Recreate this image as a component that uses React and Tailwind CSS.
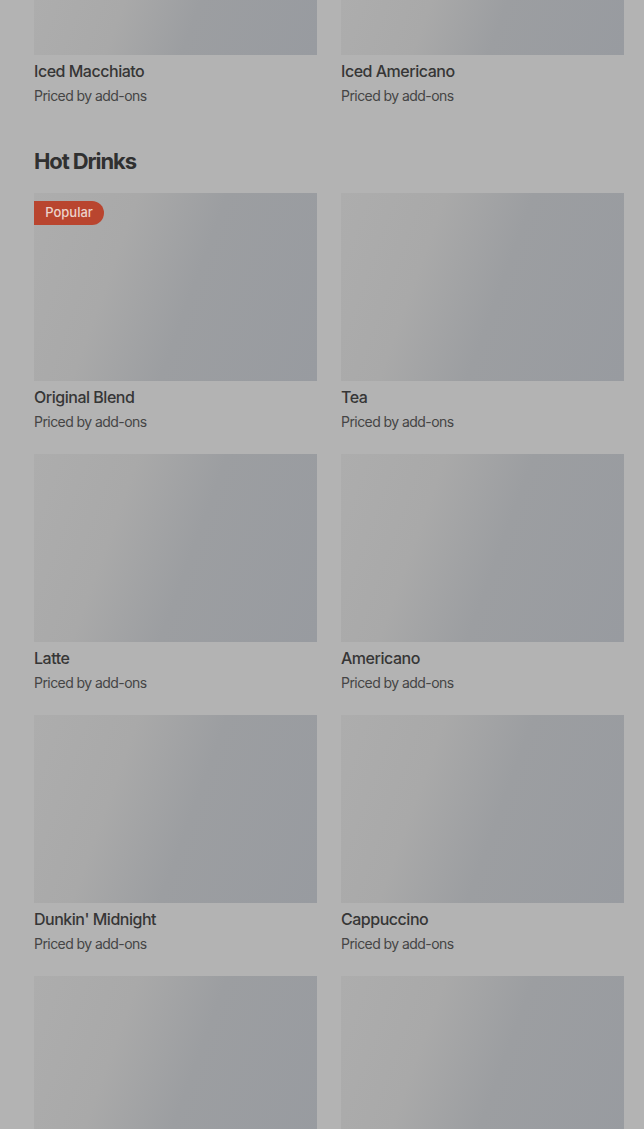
import React from "react";

const hotDrinks = [
  { name: "Original Blend", popular: true },
  { name: "Tea" },
  { name: "Latte" },
  { name: "Americano" },
  { name: "Dunkin' Midnight" },
  { name: "Cappuccino" },
  { name: "" },
  { name: "" },
];

function ItemCard({ name, popular, short }) {
  return (
    <div className="flex flex-col">
      <div
        className={`relative w-full bg-[linear-gradient(110deg,#adadad_0%,#a9a9a9_30%,#9c9ea1_55%,#989ba0_100%)] ${
          short ? "h-[55px]" : "h-[188px]"
        }`}
      >
        {popular && (
          <span className="absolute left-0 top-2 flex h-6 w-[70px] items-center justify-center rounded-r-full bg-[#b9452f] text-[13px] font-medium text-[#ecd3cc]">
            Popular
          </span>
        )}
      </div>
      {name && (
        <>
          <p className="mt-1 text-[16px] font-medium leading-6 tracking-[-0.03em] text-[#363636]">
            {name}
          </p>
          <p className="mt-[3px] text-[14px] leading-5 tracking-[-0.04em] text-[#454545]">
            Priced by add-ons
          </p>
        </>
      )}
    </div>
  );
}

export default function App() {
  return (
    <div
      className="h-[1129px] overflow-hidden bg-[#b3b3b3] pl-[34px] pr-[20px]"
      style={{ fontFamily: "Inter, 'Noto Sans', sans-serif" }}
    >
      <div className="grid grid-cols-2 gap-x-6">
        <ItemCard name="Iced Macchiato" short />
        <ItemCard name="Iced Americano" short />
      </div>

      <h2 className="mt-[41px] text-[22px] font-bold leading-7 tracking-[-0.05em] text-[#303030]">
        Hot Drinks
      </h2>

      <div className="mt-[18px] grid grid-cols-2 gap-x-6 gap-y-[22px]">
        {hotDrinks.map((item, i) => (
          <ItemCard key={i} name={item.name} popular={item.popular} />
        ))}
      </div>
    </div>
  );
}
